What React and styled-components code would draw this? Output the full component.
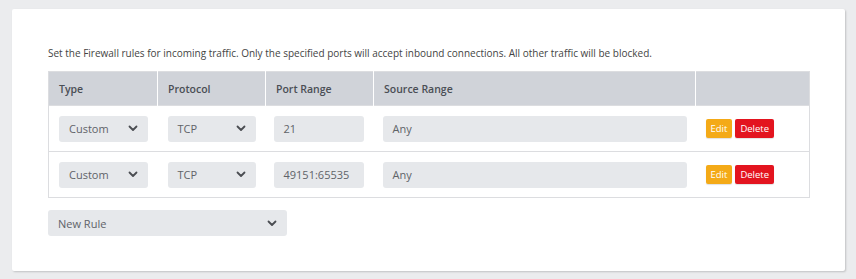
import React from "react";
import styled, { createGlobalStyle } from "styled-components";

const Global = createGlobalStyle`
  html, body { margin: 0; padding: 0; background: #ebecee; }
  body { padding: 9px 11px 8px 12px; font-family: "Open Sans", "Noto Sans", Arial, sans-serif; }
  * { box-sizing: border-box; }
`;

const Card = styled.div`
  background: #fff;
  box-shadow: 1px 1px 2px rgba(0,0,0,0.18);
  border-radius: 2px;
  padding: 37px 36px 35px 36px;
  height: 262px;
`;

const Intro = styled.p`
  margin: 0 0 10px 0;
  font-size: 10px;
  line-height: 15px;
  color: #444;
`;

const Table = styled.table`
  width: 761px;
  border-collapse: collapse;
  border: 1px solid #dcdde0;
  table-layout: fixed;
`;

const Th = styled.th`
  background: #d0d3d9;
  color: #4a4e55;
  font-size: 10.5px;
  font-weight: 600;
  text-align: left;
  height: 34px;
  padding: 0 10px;
  border-left: 1px solid #fff;
  &:first-child { border-left: none; }
`;

const Td = styled.td`
  height: 46px;
  padding: 0 10px;
  vertical-align: middle;
  &:nth-child(3) { padding-left: 8px; }
  &:nth-child(4) { padding-left: 9px; }
`;

const Tr = styled.tr`
  border-top: 1px solid #dcdde0;
`;

const Field = styled.div`
  display: flex;
  align-items: center;
  justify-content: space-between;
  height: 26px;
  width: ${(p) => p.$w || "100%"};
  background: #e6e8eb;
  border-radius: 3px;
  padding: 0 10px 0 10px;
  font-size: 11px;
  color: #606368;
`;

const Chevron = () => (
  <svg width="10" height="7" viewBox="0 0 10 7">
    <polyline points="1.5,1.5 5,5 8.5,1.5" fill="none" stroke="#4a4d52" strokeWidth="1.8" strokeLinecap="round" strokeLinejoin="round" />
  </svg>
);

const Select = ({ value, w }) => (
  <Field $w={w}>
    <span>{value}</span>
    <Chevron />
  </Field>
);

const Actions = styled.div`
  display: flex;
  gap: 3px;
`;

const Btn = styled.button`
  height: 19px;
  border: none;
  border-radius: 2px;
  padding: 0 5px;
  font-family: inherit;
  font-size: 9.5px;
  color: #fff;
  background: ${(p) => (p.$danger ? "#e3141f" : "#f4aa17")};
  box-shadow: 0 1px 1px rgba(0,0,0,0.12);
  cursor: pointer;
`;

const NewRule = styled.div`
  margin-top: 12px;
`;

const rules = [{ port: "21" }, { port: "49151:65535" }];

export default function App() {
  return (
    <>
      <Global />
      <Card>
        <Intro>
          Set the Firewall rules for incoming traffic. Only the specified ports will accept inbound connections. All other traffic will be blocked.
        </Intro>
        <Table>
          <colgroup>
            <col style={{ width: 109 }} />
            <col style={{ width: 108 }} />
            <col style={{ width: 108 }} />
            <col style={{ width: 322 }} />
            <col style={{ width: 114 }} />
          </colgroup>
          <thead>
            <tr>
              <Th>Type</Th>
              <Th>Protocol</Th>
              <Th>Port Range</Th>
              <Th>Source Range</Th>
              <Th></Th>
            </tr>
          </thead>
          <tbody>
            {rules.map((r, i) => (
              <Tr key={i}>
                <Td><Select value="Custom" /></Td>
                <Td><Select value="TCP" /></Td>
                <Td><Field>{r.port}</Field></Td>
                <Td><Field $w="304px">Any</Field></Td>
                <Td>
                  <Actions>
                    <Btn>Edit</Btn>
                    <Btn $danger>Delete</Btn>
                  </Actions>
                </Td>
              </Tr>
            ))}
          </tbody>
        </Table>
        <NewRule>
          <Select value="New Rule" w="239px" />
        </NewRule>
      </Card>
    </>
  );
}
